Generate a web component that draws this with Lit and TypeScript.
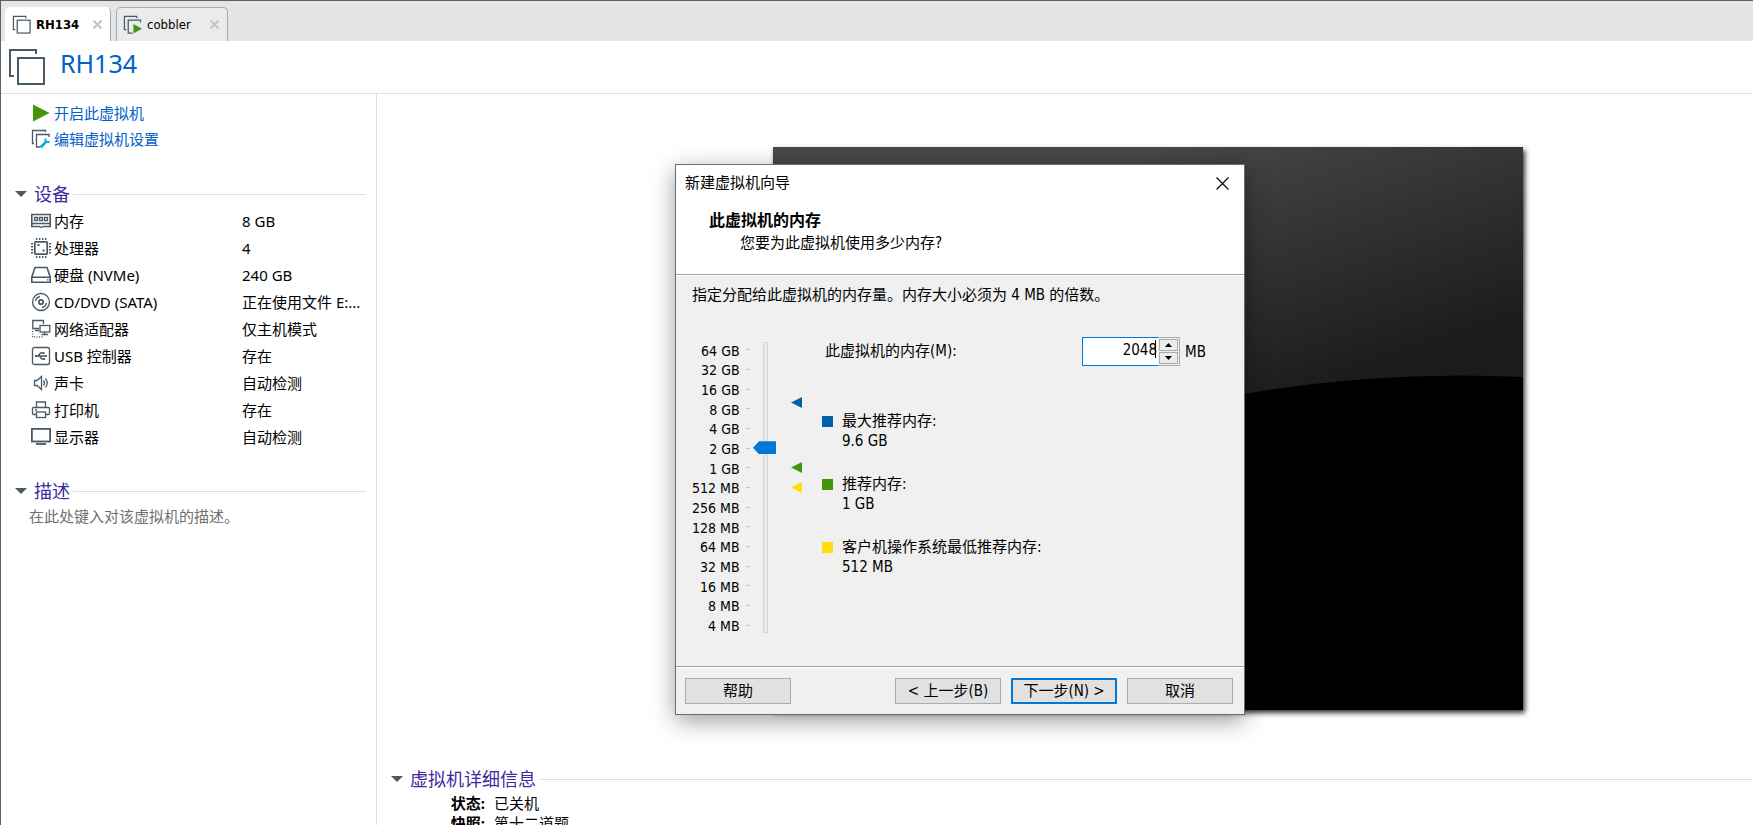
import { LitElement, html, css, svg, TemplateResult } from "lit";
import { customElement, state } from "lit/decorators.js";

interface Device {
  icon: TemplateResult;
  name: string;
  value: string;
}

const vmFrames = svg`
  <path d="M14.500 3.500V1.500H1.500V15.500H3.500" />
  <rect x="5.500" y="5.500" width="13.500" height="13.500" />`;

const devices: Device[] = [
  {
    name: "内存",
    value: "8 GB",
    icon: svg`<path stroke-width="1.6" d="M0 3.500H20M.8 3.500V15M19.200 3.500V15M0 12.500H20" /><path d="M0 15.500H8L10 16.500L12 15.500H20M3.500 6.500h3v3h-3zM8.500 6.500h3v3h-3zM13.500 6.500h3v3h-3z" />`,
  },
  {
    name: "处理器",
    value: "4",
    icon: svg`<rect x="3.800" y="3.800" width="12.400" height="12.400" rx="1" stroke-width="1.8" /><path stroke-width="2" stroke-dasharray="1.4 1.6" d="M5 1H16M5 19H16M1 5V16M19 5V16" /><path stroke-width="1.8" d="M6.500 7h2M11.500 12.500h2" />`,
  },
  {
    name: "硬盘 (NVMe)",
    value: "240 GB",
    icon: svg`<path stroke-width="1.6" d="M4 2.500H16L19.200 12V17.200H.8V12ZM.8 12.200H19" /><path d="M16 14.800h1.500" />`,
  },
  {
    name: "CD/DVD (SATA)",
    value: "正在使用文件 E:...",
    icon: svg`<circle cx="10" cy="10" r="8.500" /><circle cx="10" cy="10" r="2.200" stroke-width="1.8" /><path d="M4.500 9A6 6 0 0 1 9 4.500M11 15.500A6 6 0 0 0 15.500 11" />`,
  },
  {
    name: "网络适配器",
    value: "仅主机模式",
    icon: svg`<path d="M8 9.500H1.800V1.500H12.500V5M4 11.500H8" /><rect x="9" y="6.500" width="9.800" height="6.500" /><path d="M13.500 13V15.500M10.500 15.500H17" /><path stroke-dasharray="1 1.500" d="M1.500 12V18H13" />`,
  },
  {
    name: "USB 控制器",
    value: "存在",
    icon: svg`<rect x="1.500" y="1.500" width="17" height="17" rx="2" /><path d="M4.500 10H15M7 10L9.500 7H12M8.500 10L11 13H13" /><path stroke-width="2" d="M4 10h2M12 7h1.500M12.500 13h1.500M14.500 10h1.500" />`,
  },
  {
    name: "声卡",
    value: "自动检测",
    icon: svg`<path d="M3.500 7.500H6L10.500 3.500V16.500L6 12.500H3.500ZM12.500 7.500Q14.500 10 12.500 12.500M14.500 5.500Q18 10 14.500 14.500" />`,
  },
  {
    name: "打印机",
    value: "存在",
    icon: svg`<path d="M5.500 7V2H14.500V7M5.500 14.500H2.500Q1.500 14.500 1.500 13.500V8.500Q1.500 7.500 2.500 7.500H17.500Q18.500 7.500 18.500 8.500V13.500Q18.500 14.500 17.500 14.500H14.500" /><rect x="5.500" y="12" width="9" height="5.500" /><path d="M4 10h2" />`,
  },
  {
    name: "显示器",
    value: "自动检测",
    icon: svg`<rect x=".9" y="1.900" width="18.200" height="12.600" stroke-width="1.800" /><path stroke-width="1.800" d="M5 17H15" />`,
  },
];

const scale = [
  "64 GB", "32 GB", "16 GB", "8 GB", "4 GB", "2 GB", "1 GB", "512 MB",
  "256 MB", "128 MB", "64 MB", "32 MB", "16 MB", "8 MB", "4 MB",
];

const hints = [
  { tone: "max", label: "最大推荐内存:", value: "9.6 GB" },
  { tone: "best", label: "推荐内存:", value: "1 GB" },
  { tone: "min", label: "客户机操作系统最低推荐内存:", value: "512 MB" },
];

@customElement("section-heading")
export class SectionHeading extends LitElement {
  static styles = css`
    :host { display: block; }
    .heading { display: flex; align-items: center; margin: 0; color: #3d2a9c; font-size: 18px; line-height: 26px; font-weight: 400; }
    .arrow { width: 12px; height: 6px; background: #485a66; clip-path: polygon(0 0, 100% 0, 50% 100%); margin-right: 7px; }
    .rule { flex: 1; height: 1px; background: #dfdfdf; margin-left: 3px; }
  `;
  render() {
    return html`<h2 class="heading"><span class="arrow"></span><slot></slot><span class="rule"></span></h2>`;
  }
}

@customElement("memory-wizard")
export class MemoryWizard extends LitElement {
  @state() private megabytes = 2048;

  static styles = css`
    :host {
      display: flex; flex-direction: column; box-sizing: border-box;
      border: 1px solid #6b6b6b; background: #f0f0f0; color: #000;
      box-shadow: 0 6px 22px rgba(0, 0, 0, 0.38);
      font-family: "DejaVu Sans Condensed", "Noto Sans", "Noto Sans CJK SC", sans-serif;
      font-size: 15px; line-height: 20px;
    }
    .top { background: #fff; border-bottom: 1px solid #a0a0a0; box-shadow: 0 1px #fff; padding-bottom: 20px; }
    .titlebar { display: flex; justify-content: space-between; align-items: center; height: 36px; padding: 0 15px 0 9px; }
    .close { border: 0; padding: 0; background: none; width: 13px; height: 13px; display: flex; }
    .cross { width: 13px; height: 13px; stroke: #000; stroke-width: 1.1; fill: none; }
    .title { margin: 9px 0 0 33px; font-size: 16px; line-height: 22px; font-weight: 700; }
    .subtitle { margin: 0 0 0 64px; line-height: 22px; }
    .body { flex: 1; padding: 9px 18px 0 16px; }
    .intro { margin: 0; line-height: 22px; }
    .controls { display: flex; margin-top: 36px; }
    .labels { display: grid; grid-auto-rows: 1fr; width: 46px; height: 295px; margin: -1px 0 0; padding: 0; list-style: none; font-size: 14px; line-height: 18px; text-align: right; white-space: nowrap; align-items: center; }
    .ticks { display: grid; grid-auto-rows: 1fr; align-items: center; width: 4px; height: 295px; margin: -2px 3px 0 8px; }
    .tick { height: 1px; background: #c4c4c4; }
    .slider {
      -webkit-appearance: none; appearance: none; writing-mode: vertical-lr; direction: rtl;
      width: 23px; height: 291px; margin: 0; background: none;
    }
    .slider::-webkit-slider-runnable-track {
      width: 23px; height: 100%;
      background:
        linear-gradient(#d6d6d6, #d6d6d6) 10px 0 / 5px 1px no-repeat,
        linear-gradient(#d6d6d6, #d6d6d6) 10px 100% / 5px 1px no-repeat,
        linear-gradient(90deg, #d6d6d6 1px, #e7eaea 1px 4px, #d6d6d6 4px) 10px 0 / 5px 100% no-repeat;
    }
    .slider::-webkit-slider-thumb {
      -webkit-appearance: none; width: 23px; height: 13px; border: 0; border-radius: 0;
      background: #0078d7; clip-path: polygon(0 50%, 6px 0, 100% 0, 100% 100%, 6px 100%);
    }
    .markers { display: flex; flex-direction: column; width: 11px; margin-left: 15px; padding-top: 55px; }
    .marker { width: 11px; height: 11px; clip-path: polygon(0 50%, 100% 0, 100% 100%); }
    .marker.best { margin-top: 54px; }
    .marker.min { margin-top: 9px; }
    .max { background: #0061a9; }
    .best { background: #44940c; }
    .min { background: #ffdc0b; }
    .settings { flex: 1; margin-left: 20px; }
    .field { display: flex; align-items: center; height: 29px; margin: -5px 0 0 3px; }
    .name { flex: 1; margin-top: -2px; }
    .spin { position: relative; display: flex; width: 98px; height: 29px; }
    .amount { flex: 1; min-width: 0; box-sizing: border-box; border: 1px solid #0078d7; border-right: 0; padding: 0 1px 3px 0; text-align: right; font: inherit; background: #fff; outline: 0; border-radius: 0; }
    .caret { position: absolute; right: 24px; top: 3px; width: 1px; height: 18px; background: #000; }
    .steps { display: grid; gap: 1px; width: 22px; box-sizing: border-box; border: 1px solid #acacac; border-left: 0; padding: 1px; }
    .step { display: grid; place-items: center; border: 1px solid #acacac; background: #ececec; padding: 0; }
    .glyph { width: 7px; height: 4px; background: #000; clip-path: polygon(50% 0, 100% 100%, 0 100%); }
    .glyph.down { clip-path: polygon(0 0, 100% 0, 50% 100%); }
    .unit { width: 41px; margin-left: 5px; }
    .hints { margin: 45px 0 0; display: grid; gap: 23px; }
    .hint { display: grid; grid-template-columns: 11px 1fr; column-gap: 9px; align-items: center; }
    .swatch { width: 11px; height: 11px; }
    .term, .data { margin: 0; }
    .data { grid-column: 2; }
    .footer { display: flex; gap: 10px; padding: 11px 11px 10px 9px; border-top: 1px solid #a0a0a0; box-shadow: inset 0 1px #fff; }
    .button { width: 106px; height: 26px; box-sizing: border-box; padding: 0; border: 1px solid #adadad; background: #e1e1e1; font: inherit; color: inherit; }
    .button.primary { border: 2px solid #0078d7; }
    .help { margin-right: auto; }
  `;

  private onSlide(e: Event) {
    this.megabytes = 4 * 2 ** Number((e.target as HTMLInputElement).value);
  }

  private onType(e: Event) {
    this.megabytes = Number((e.target as HTMLInputElement).value) || 4;
  }

  private step(by: number) {
    this.megabytes = Math.max(4, this.megabytes + by);
  }

  render() {
    return html`
      <header class="top">
        <div class="titlebar">
          <span>新建虚拟机向导</span>
          <button class="close" aria-label="关闭"><svg class="cross" viewBox="0 0 13 13"><path d="M.5 .5L12.500 12.500M12.500 .5L.5 12.500" /></svg></button>
        </div>
        <h2 class="title">此虚拟机的内存</h2>
        <p class="subtitle">您要为此虚拟机使用多少内存?</p>
      </header>
      <div class="body">
        <p class="intro">指定分配给此虚拟机的内存量。内存大小必须为 4 MB 的倍数。</p>
        <div class="controls">
          <ul class="labels">${scale.map((s) => html`<li>${s}</li>`)}</ul>
          <div class="ticks">${scale.map(() => html`<span class="tick"></span>`)}</div>
          <input class="slider" type="range" min="0" max="14" step="1" aria-label="内存"
            .value=${String(Math.round(Math.log2(this.megabytes / 4)))} @input=${this.onSlide} />
          <div class="markers">${hints.map((h) => html`<span class="marker ${h.tone}"></span>`)}</div>
          <div class="settings">
            <div class="field">
              <label class="name" for="amount">此虚拟机的内存(M):</label>
              <div class="spin">
                <input class="amount" id="amount" type="text" inputmode="numeric" .value=${String(this.megabytes)} @change=${this.onType} />
                <span class="caret"></span>
                <span class="steps">
                  <button class="step" aria-label="增加" @click=${() => this.step(4)}><span class="glyph"></span></button>
                  <button class="step" aria-label="减少" @click=${() => this.step(-4)}><span class="glyph down"></span></button>
                </span>
              </div>
              <span class="unit">MB</span>
            </div>
            <dl class="hints">
              ${hints.map((h) => html`<div class="hint"><span class="swatch ${h.tone}"></span><dt class="term">${h.label}</dt><dd class="data">${h.value}</dd></div>`)}
            </dl>
          </div>
        </div>
      </div>
      <footer class="footer">
        <button class="button help">帮助</button>
        <button class="button">&lt; 上一步(B)</button>
        <button class="button primary">下一步(N) &gt;</button>
        <button class="button">取消</button>
      </footer>`;
  }
}

@customElement("app-root")
export class AppRoot extends LitElement {
  static styles = css`
    :host {
      display: flex; flex-direction: column; position: relative; box-sizing: border-box;
      height: 100vh; overflow: hidden; background: #fff; color: #000;
      border-top: 1px solid #606063; border-left: 1px solid #606063;
      font-family: "Noto Sans", "Noto Sans CJK SC", sans-serif; font-size: 15px; line-height: 20px;
    }
    .tabs { display: flex; align-items: flex-end; gap: 5px; height: 40px; padding-left: 4px; background: #e4e5e7; flex: none; }
    .tab { display: flex; align-items: center; box-sizing: border-box; height: 34px; width: 112px; padding: 0 8px 0 6px; border: 1px solid #a9a9ab; border-bottom: 0; border-radius: 5px 5px 0 0; background: #eaebed; font-family: "DejaVu Sans Condensed", "Noto Sans", sans-serif; font-size: 13px; }
    .tab.active { width: 106px; background: #fff; border-color: #fff #a9a9ab #fff #fff; font-weight: 700; }
    .tab-icon { width: 19px; height: 19px; margin-right: 5px; }
    .frames { fill: none; stroke: #485a66; stroke-width: 1.3; }
    .dismiss { margin-left: auto; border: 0; padding: 0; background: none; display: flex; }
    .dismiss-mark { width: 9px; height: 9px; stroke: #c3c3c3; stroke-width: 2; }
    .banner { display: flex; height: 52px; padding-left: 8px; border-bottom: 1px solid #dfdfdf; flex: none; }
    .banner-icon { width: 36px; height: 36px; margin: 8px 15px 0 0; fill: none; stroke: #485a66; stroke-width: 2; }
    .vm-name { margin: 5px 0 0; color: #0061c9; font-size: 25px; line-height: 34px; font-weight: 400; }
    .workspace { display: flex; flex: 1; min-height: 0; }
    .sidebar { box-sizing: border-box; width: 376px; flex: none; border-right: 1px solid #dfdfdf; padding: 6px 10px 0 14px; }
    .actions { display: grid; margin: 0 0 29px 16px; padding: 0; list-style: none; }
    .action { display: flex; align-items: center; height: 26px; gap: 4px; color: #0061c9; text-decoration: none; }
    .action-icon { width: 19px; height: 20px; flex: none; }
    .devices { margin: 0 0 28px 16px; border-collapse: collapse; }
    .device { display: flex; height: 27px; align-items: center; }
    .cell { padding: 0; text-align: left; font-weight: 400; white-space: nowrap; }
    .device-name { display: flex; align-items: center; width: 211px; gap: 3px; }
    .device-icon { width: 20px; height: 20px; fill: none; stroke: #485a66; stroke-width: 1.3; }
    .note { margin: 2px 0 0 14px; color: #707070; }
    .main { flex: 1; min-width: 0; padding: 53px 0 0; }
    .stage { display: grid; grid-template-columns: 396fr 750px 230fr; }
    .screen { grid-column: 2; display: block; width: 100%; aspect-ratio: 750 / 563; box-shadow: 2px 3px 5px rgba(0, 0, 0, 0.8); }
    .details { padding: 56px 0 0 14px; }
    .facts { display: grid; grid-template-columns: 94px 1fr; column-gap: 9px; margin: 1px 0 0; line-height: 20px; }
    .fact { font-weight: 700; text-align: right; }
    .fact-value { margin: 0; }
    .wizard { position: absolute; left: 674px; top: 163px; width: 570px; height: 551px; }
  `;

  private tab(name: string, active: boolean, running: boolean) {
    return html`
      <div class="tab ${active ? "active" : ""}">
        <svg class="tab-icon frames" viewBox="0 0 20 20">
          ${running
            ? svg`<path d="M18.500 8V5.500H5.500V19H10M14.500 3.500V1.500H1.500V15.500H3.500" /><path fill="#44940c" stroke="none" d="M11 9.500L20 14.500L11 19.500Z" />`
            : vmFrames}
        </svg>
        <span>${name}</span>
        <button class="dismiss" aria-label="关闭标签"><svg class="dismiss-mark" viewBox="0 0 9 9"><path d="M.5 .5L8.500 8.500M8.500 .5L.5 8.500" /></svg></button>
      </div>`;
  }

  render() {
    return html`
      <nav class="tabs">${this.tab("RH134", true, false)}${this.tab("cobbler", false, true)}</nav>
      <header class="banner">
        <svg class="banner-icon" viewBox="0 0 36 36"><path d="M27 5V1H1V27H5" /><rect x="9" y="9" width="26" height="26" /></svg>
        <h1 class="vm-name">RH134</h1>
      </header>
      <div class="workspace">
        <aside class="sidebar">
          <ul class="actions">
            <li><a class="action" href="#start">
              <svg class="action-icon" viewBox="0 0 19 20"><path fill="#44940c" d="M2 1.500L18.500 10L2 18.500Z" /></svg>开启此虚拟机</a></li>
            <li><a class="action" href="#settings">
              <svg class="action-icon frames" viewBox="0 0 19 20"><path d="M14.500 3V1.500H1.500V14.500H3M18 8V5.500H5.500V18H9" /><path stroke="#00b3d6" stroke-width="2.600" d="M9.500 18.500L14.500 13.500" /><path stroke="#00b3d6" stroke-width="2" d="M14.500 9.500V13H18.500" /></svg>编辑虚拟机设置</a></li>
          </ul>
          <section-heading>设备</section-heading>
          <table class="devices">
            <tbody>
              ${devices.map((d) => html`
                <tr class="device">
                  <th class="cell device-name" scope="row"><svg class="device-icon" viewBox="0 0 20 20">${d.icon}</svg>${d.name}</th>
                  <td class="cell">${d.value}</td>
                </tr>`)}
            </tbody>
          </table>
          <section-heading>描述</section-heading>
          <p class="note">在此处键入对该虚拟机的描述。</p>
        </aside>
        <main class="main">
          <div class="stage">
            <svg class="screen" viewBox="0 0 750 563" preserveAspectRatio="none">
              <defs>
                <linearGradient id="sheen" gradientUnits="userSpaceOnUse" x1="380" y1="0" x2="470" y2="270">
                  <stop offset="0" stop-color="#484848" />
                  <stop offset="1" stop-color="#1b1b1b" />
                </linearGradient>
              </defs>
              <rect width="750" height="563" fill="url(#sheen)" />
              <path d="M0 370Q230 290 471 247Q610 223 750 230V563H0Z" fill="#000" />
            </svg>
          </div>
          <section class="details">
            <section-heading>虚拟机详细信息</section-heading>
            <dl class="facts">
              <dt class="fact">状态:</dt><dd class="fact-value">已关机</dd>
              <dt class="fact">快照:</dt><dd class="fact-value">第十二道题</dd>
            </dl>
          </section>
        </main>
      </div>
      <memory-wizard class="wizard" role="dialog" aria-label="新建虚拟机向导"></memory-wizard>`;
  }
}
